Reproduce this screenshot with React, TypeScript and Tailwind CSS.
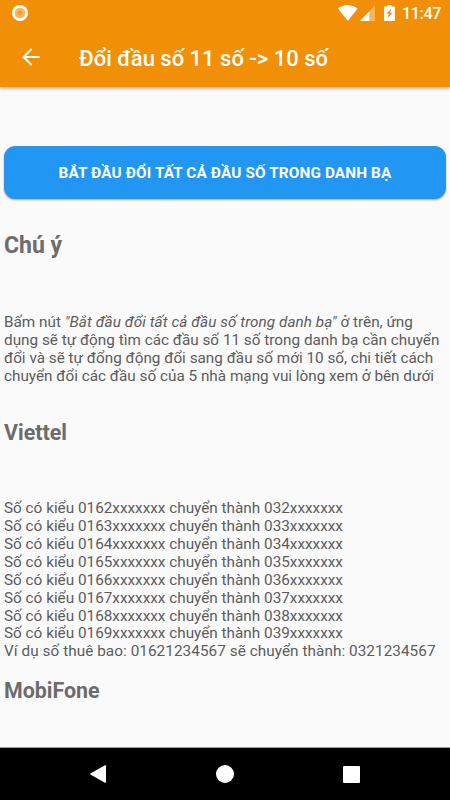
const viettelPrefixes = [
    { from: "0162", to: "032" },
    { from: "0163", to: "033" },
    { from: "0164", to: "034" },
    { from: "0165", to: "035" },
    { from: "0166", to: "036" },
    { from: "0167", to: "037" },
    { from: "0168", to: "038" },
    { from: "0169", to: "039" },
]

function StatusBar() {
    return (
        <div className="flex h-[26px] items-center justify-between pl-3 pr-[9px] text-white">
            <svg width="16" height="16" viewBox="0 0 16 16">
                <circle cx="8" cy="8" r="8" fill="#fff" />
                <circle cx="8" cy="8" r="5.3" fill="#f7b55c" />
                <circle cx="8" cy="8" r="2.4" fill="#f39f2c" />
            </svg>

            <div className="flex items-center">
                <svg width="20" height="16" viewBox="0 0 20 16" fill="#fff">
                    <path d="M0 3.6C2.8 1.2 6.2 0 9.8 0s7 1.2 9.8 3.6L9.8 16z" />
                </svg>

                <svg
                    width="15"
                    height="16"
                    viewBox="0 0 15 16"
                    fill="#fff"
                    className="ml-[2px]"
                >
                    <path d="M15 .5V16H0z" fillOpacity=".35" />
                    <path d="M9.3 6.4V16H0z" />
                </svg>

                <svg
                    width="11"
                    height="16"
                    viewBox="0 0 11 16"
                    className="ml-[9px]"
                >
                    <path
                        d="M3.5 0h4v1.6H10c.6 0 .9.4.9.9v12.6c0 .5-.4.9-.9.9H1c-.5 0-.9-.4-.9-.9V2.5c0-.5.4-.9.9-.9h2.5z"
                        fill="#fff"
                    />
                    <path d="M7.2 3.4 2.6 8.8h2.3L3.8 13.3l4.600-5.600H6.100z" fill="#f18f07" />
                </svg>

                <span className="ml-[7px] w-[39px] pt-[2px] text-[16.2px] leading-[24px] font-medium tracking-[-0.4px] whitespace-nowrap">
                    11:47
                </span>
            </div>
        </div>
    )
}

function AppBar() {
    return (
        <div className="flex h-[61px] items-center pl-[22px] text-white">
            <svg width="18" height="18" viewBox="0 0 18 18" fill="none" stroke="#fff" strokeWidth="2">
                <path d="M17.7 9H1.6M9.7.9 1.5 9l8.2 8.1" />
            </svg>

            <h1 className="ml-[39px] pt-[3px] text-[22px] font-medium whitespace-nowrap">
                Đổi đầu số 11 số -&gt; 10 số
            </h1>
        </div>
    )
}

function NavigationBar() {
    return (
        <nav className="flex h-[53px] shrink-0 items-center justify-between border-t border-[#a0a0a0] bg-black px-[90px]">
            <svg width="16" height="18" viewBox="0 0 16 18" fill="#fff">
                <path d="M15 .2c.5-.3 1 0 1 .5v16.6c0 .5-.5.8-1 .5L.4 9.5a.6.6 0 0 1 0-1z" />
            </svg>

            <span className="h-[18px] w-[18px] rounded-full bg-white" />
            <span className="h-[17px] w-[17px] rounded-[1px] bg-white" />
        </nav>
    )
}

export default function App() {
    return (
        <div className="flex h-[800px] w-[450px] flex-col overflow-hidden bg-[#fafafa] font-['Roboto',sans-serif] text-[#5c5c5c]">
            <header className="relative h-[87px] shrink-0 bg-[#f18f07] shadow-[0_1px_4px_rgba(0,0,0,0.4)]">
                <StatusBar />
                <AppBar />
            </header>

            <main className="flex-1 overflow-hidden px-[4px] pt-[59px]">
                <button className="block h-[53px] w-[442px] rounded-[11px] border border-[#3a8fdc] bg-[#2196f3] pt-[2px] text-[15.3px] font-bold tracking-[0.14px] text-white shadow-[0_1px_2px_rgba(0,0,0,0.35)]">
                    BẮT ĐẦU ĐỔI TẤT CẢ ĐẦU SỐ TRONG DANH BẠ
                </button>

                <h2 className="mt-[33px] text-[23px] leading-[27px] font-bold text-[#6c6c6c]">
                    Chú ý
                </h2>

                <p className="mt-[55px] text-[15.3px] leading-[17.95px] whitespace-nowrap">
                    Bấm nút <i className="tracking-[0.05px]">"Bắt đầu đổi tất cả đầu số trong danh bạ"</i> ở trên, ứng
                    <br />
                    dụng sẽ tự động tìm các đầu số 11 số trong danh bạ cần chuyển
                    <br />
                    đổi và sẽ tự đổng động đổi sang đầu số mới 10 số, chi tiết cách
                    <br />
                    chuyển đổi các đầu số của 5 nhà mạng vui lòng xem ở bên dưới
                </p>

                <h2 className="mt-[34px] text-[21.4px] leading-[25px] font-bold text-[#6c6c6c]">
                    Viettel
                </h2>

                <div className="mt-[55px] text-[15.3px] leading-[17.95px] whitespace-nowrap">
                    {viettelPrefixes.map((item) => (
                        <p key={item.from}>
                            Số có kiểu {item.from}xxxxxxx chuyển thành {item.to}xxxxxxx
                        </p>
                    ))}

                    <p className="tracking-[0.06px]">
                        Ví dụ số thuê bao: 01621234567 sẽ chuyển thành: 0321234567
                    </p>
                </div>

                <h2 className="mt-[17px] text-[21.4px] leading-[25px] font-bold text-[#6c6c6c]">
                    MobiFone
                </h2>
            </main>

            <NavigationBar />
        </div>
    )
}
